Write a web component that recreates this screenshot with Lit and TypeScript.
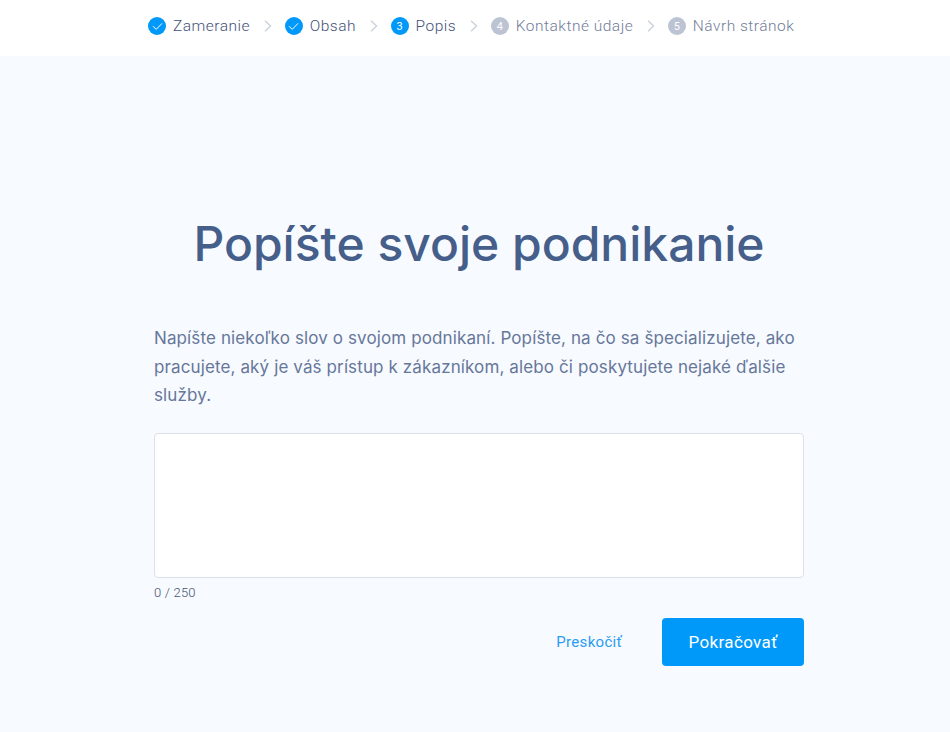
import { LitElement, html, css, svg } from "lit";
import { customElement } from "lit/decorators.js";

const check = svg`<svg class="tick" width="11" height="9" viewBox="0 0 11 9"><path d="M1 4.2 4.2 7.4 10 1.4" fill="none" stroke="#fff" stroke-width="1"/></svg>`;
const chev = html`<svg class="chev" width="8" height="12" viewBox="0 0 8 12"><path d="M1 .8 6.6 6 1 11.2" fill="none" stroke="#c9cfdc" stroke-width="1.3"/></svg>`;

@customElement("app-root")
export class AppRoot extends LitElement {
  static styles = css`
    :host { display: block; height: 732px; background: #f7faff; font-family: Roboto, "Liberation Sans", sans-serif; color: #5a6c8f; overflow: hidden; }
    .top { height: 56px; background: #fff; display: flex; align-items: center; padding: 0 0 4px 148px; box-sizing: border-box; font-size: 15.5px; font-weight: 300; letter-spacing: 0.5px; }
    .step { display: flex; align-items: center; gap: 7px; color: #3f5179; }
    .step.off { color: #717d99; }
    .dot { width: 18px; height: 18px; border-radius: 50%; background: #0099fa; color: #fff; font-size: 11px; font-weight: 400; display: flex; align-items: center; justify-content: center; letter-spacing: 0; }
    .off .dot { background: #bcc4d4; }
    .chev { margin: 0 13px 0 13.6px; }
    main { width: 650px; margin-left: 154px; display: flex; flex-direction: column; }
    h1 { margin: 158px 0 0; text-align: center; font-family: Inter, sans-serif; font-size: 48px; line-height: 60px; font-weight: 500; color: #455e8a; letter-spacing: 0; }
    p { margin: 50px 0 0; font-family: Inter, sans-serif; font-size: 17px; font-weight: 400; line-height: 28.5px; letter-spacing: 0.12px; color: #66779a; }
    textarea { display: block; width: 100%; height: 145px; box-sizing: border-box; margin-top: 23.5px; background: #fff; border: 1px solid #dbe0e9; border-radius: 4px; resize: none; outline: none; padding: 10px; }
    .count { margin-top: 7px; font-size: 13px; font-weight: 300; line-height: 16px; letter-spacing: 0.2px; color: #45536f; }
    .actions { display: flex; justify-content: flex-end; align-items: center; margin-top: 17px; gap: 40px; }
    .skip { font-size: 15px; letter-spacing: 0.3px; color: #2b9cf2; text-decoration: none; margin-top: -1px; }
    .go { width: 142px; height: 48px; background: #0099fa; color: #fff; border: 0; border-radius: 4px; font: 400 17px Roboto, sans-serif; letter-spacing: 0.35px; }
  `;
  private step(icon: unknown, label: string, off = false) {
    return html`<div class="step ${off ? "off" : ""}"><span class="dot">${icon}</span>${label}</div>`;
  }
  render() {
    return html`
      <div class="top">
        ${this.step(check, "Zameranie")}${chev}
        ${this.step(check, "Obsah")}${chev}
        ${this.step("3", "Popis")}${chev}
        ${this.step("4", "Kontaktné údaje", true)}${chev}
        ${this.step("5", "Návrh stránok", true)}
      </div>
      <main>
        <h1>Popíšte svoje podnikanie</h1>
        <p>Napíšte niekoľko slov o svojom podnikaní. Popíšte, na čo sa špecializujete, ako pracujete, aký je váš prístup k zákazníkom, alebo či poskytujete nejaké ďalšie služby.</p>
        <textarea aria-label="Popis"></textarea>
        <div class="count">0 / 250</div>
        <div class="actions">
          <a class="skip" href="#">Preskočiť</a>
          <button class="go">Pokračovať</button>
        </div>
      </main>
    `;
  }
}
